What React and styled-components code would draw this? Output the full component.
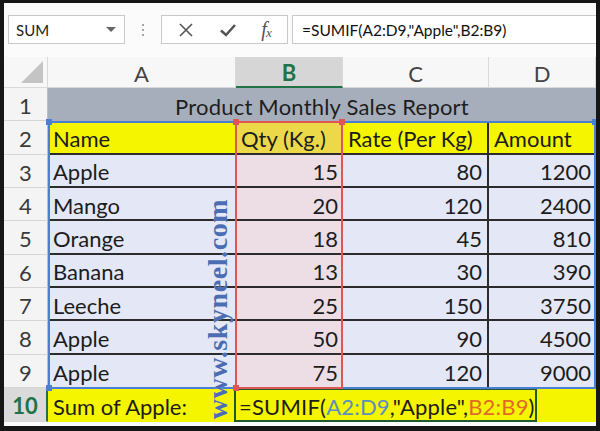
import React from "react";
import styled, { createGlobalStyle } from "styled-components";

const Global = createGlobalStyle`
  html, body { margin: 0; padding: 0; background: #151515; }
  #root { width: 600px; height: 431px; }
`;

const Frame = styled.div`
  width: 600px;
  height: 431px;
  box-sizing: border-box;
  padding: 3px 4px 5px 4px;
  background: #161616;
`;

const Window = styled.div`
  height: 100%;
  background: #fbfbfb;
  display: flex;
  flex-direction: column;
  overflow: hidden;
`;

const Toolbar = styled.div`
  height: 54px;
  box-sizing: border-box;
  padding: 12px 0 0 4px;
  display: flex;
  align-items: flex-start;
  font-family: "Lato", "Noto Sans", sans-serif;
  color: #222;
`;

const NameBox = styled.div`
  width: 117px;
  height: 29px;
  box-sizing: border-box;
  border: 1px solid #c9c9c9;
  background: #fff;
  display: flex;
  align-items: center;
  justify-content: space-between;
  padding: 0 8px 0 7px;
  font-size: 15px;
`;

const Caret = styled.span`
  width: 0;
  height: 0;
  border-left: 5px solid transparent;
  border-right: 5px solid transparent;
  border-top: 5px solid #666;
`;

const Dots = styled.div`
  width: 36px;
  height: 29px;
  display: flex;
  flex-direction: column;
  align-items: center;
  justify-content: center;
  gap: 3px;
  span { width: 2px; height: 2px; background: #888; border-radius: 1px; }
`;

const Buttons = styled.div`
  width: 127px;
  height: 29px;
  box-sizing: border-box;
  border: 1px solid #c9c9c9;
  background: #fff;
  display: flex;
  align-items: center;
  justify-content: space-around;
  padding: 0 4px;
`;

const Fx = styled.span`
  font-family: "Liberation Serif", serif;
  font-style: italic;
  font-size: 20px;
  color: #555;
  letter-spacing: -1px;
  sub { font-size: 13px; vertical-align: -1px; }
`;

const FormulaBox = styled.div`
  flex: 1;
  margin-left: 4px;
  height: 29px;
  box-sizing: border-box;
  border: 1px solid #c9c9c9;
  border-right: none;
  background: #fff;
  display: flex;
  align-items: center;
  padding-left: 9px;
  font-size: 15.5px;
  color: #111;
`;

const SheetWrap = styled.div`
  position: relative;
  height: 365px;
`;

const Sheet = styled.div`
  display: grid;
  grid-template-columns: 44px 188px 107px 146px 107px;
  grid-template-rows: 31px repeat(10, 1fr);
  height: 100%;
  font-family: "Lato", "Noto Sans", sans-serif;
  font-size: 22px;
  color: #1c1c1c;
`;

const Corner = styled.div`
  background: #f7f7f7;
  border-right: 1px solid #d9d9d9;
  border-bottom: 1px solid #d9d9d9;
  position: relative;
  &::after {
    content: "";
    position: absolute;
    right: 4px;
    bottom: 4px;
    width: 0;
    height: 0;
    border-left: 22px solid transparent;
    border-bottom: 22px solid #c4c4c4;
  }
`;

const ColHead = styled.div`
  background: ${(p) => (p.$active ? "#d6d6d6" : "#f7f7f7")};
  border-right: 1px solid #d9d9d9;
  border-bottom: ${(p) => (p.$active ? "2px solid #217346" : "1px solid #d9d9d9")};
  color: ${(p) => (p.$active ? "#217346" : "#444")};
  font-weight: ${(p) => (p.$active ? 700 : 400)};
  display: flex;
  align-items: center;
  justify-content: center;
  padding-top: 2px;
  font-size: 22px;
`;

const RowHead = styled.div`
  background: ${(p) => (p.$active ? "#dadada" : "#f4f4f4")};
  border-bottom: 1px solid #d6d6d6;
  border-right: ${(p) => (p.$active ? "2px solid #217346" : "1px solid #bdbdbd")};
  color: ${(p) => (p.$active ? "#217346" : "#3a3a3a")};
  font-weight: ${(p) => (p.$active ? 700 : 400)};
  display: flex;
  align-items: center;
  justify-content: center;
  padding-top: 3px;
`;

const Title = styled.div`
  grid-column: span 4;
  background: #a6aebb;
  display: flex;
  align-items: center;
  justify-content: center;
  padding-top: 3px;
  color: #1e1e1e;
  letter-spacing: 0.2px;
`;

const Cell = styled.div`
  box-sizing: border-box;
  background: ${(p) => p.$bg};
  display: flex;
  align-items: center;
  justify-content: ${(p) => (p.$right ? "flex-end" : "flex-start")};
  padding: 3px 5px 0;
  border-bottom: ${(p) => (p.$lineBottom ? "2px solid #2b2b2b" : "none")};
  border-right: ${(p) => (p.$lineRight ? "2px solid #2b2b2b" : "none")};
  white-space: nowrap;
`;

const SumRow = styled.div`
  grid-column: span 3;
  background: #f5f500;
  display: flex;
  align-items: stretch;
`;

const Editor = styled.div`
  width: 303px;
  margin-left: -2px;
  box-sizing: border-box;
  border: 2px solid #1f5a2e;
  display: flex;
  align-items: center;
  padding: 3px 0 0 3px;
  white-space: nowrap;
  letter-spacing: 0.2px;
`;

const Ref = styled.span`
  color: ${(p) => p.$c};
`;

const Selection = styled.div`
  position: absolute;
  box-sizing: border-box;
  left: ${(p) => p.$l}px;
  top: 64.4px;
  width: ${(p) => p.$w}px;
  height: 267.2px;
  border: ${(p) => p.$bw}px solid ${(p) => p.$c};
  pointer-events: none;
`;

const Handle = styled.div`
  position: absolute;
  width: 6px;
  height: 6px;
  background: ${(p) => p.$c};
  left: ${(p) => p.$x - 3}px;
  top: ${(p) => p.$y - 3}px;
`;

const Watermark = styled.div`
  position: absolute;
  left: 214px;
  top: 252px;
  transform: translate(-50%, -50%) rotate(-90deg);
  font-family: "Liberation Serif", "DejaVu Serif", serif;
  font-weight: 700;
  font-size: 28px;
  color: #4a6db3;
  white-space: nowrap;
  letter-spacing: 0.6px;
  text-shadow: 0 0 1px rgba(255, 255, 255, 0.6);
  pointer-events: none;
`;

const data = [
  ["Apple", 15, 80, 1200],
  ["Mango", 20, 120, 2400],
  ["Orange", 18, 45, 810],
  ["Banana", 13, 30, 390],
  ["Leeche", 25, 150, 3750],
  ["Apple", 50, 90, 4500],
  ["Apple", 75, 120, 9000],
];

const LAV = "#e4e7f5";
const PINK = "#eddde4";
const YEL = "#f5f500";
const YEL_B = "#ecd94a";

export default function App() {
  return (
    <>
      <Global />
      <Frame>
        <Window>
          <Toolbar>
            <NameBox>
              SUM <Caret />
            </NameBox>
            <Dots>
              <span />
              <span />
              <span />
            </Dots>
            <Buttons>
              <svg width="16" height="16" viewBox="0 0 16 16">
                <path d="M2 2 L14 14 M14 2 L2 14" stroke="#555" strokeWidth="1.6" fill="none" />
              </svg>
              <svg width="18" height="16" viewBox="0 0 18 16">
                <path d="M2 8.5 L7 13 L16 3" stroke="#555" strokeWidth="2.6" fill="none" />
              </svg>
              <Fx>
                f<sub>x</sub>
              </Fx>
            </Buttons>
            <FormulaBox>=SUMIF(A2:D9,"Apple",B2:B9)</FormulaBox>
          </Toolbar>
          <SheetWrap>
            <Sheet>
              <Corner />
              <ColHead>A</ColHead>
              <ColHead $active>B</ColHead>
              <ColHead>C</ColHead>
              <ColHead>D</ColHead>

              <RowHead>1</RowHead>
              <Title>Product Monthly Sales Report</Title>

              <RowHead>2</RowHead>
              <Cell $bg={YEL} $lineBottom>Name</Cell>
              <Cell $bg={YEL_B} $lineBottom>Qty (Kg.)</Cell>
              <Cell $bg={YEL} $lineBottom $lineRight>Rate (Per Kg)</Cell>
              <Cell $bg={YEL} $lineBottom>Amount</Cell>

              {data.map((r, i) => {
                const last = i === data.length - 1;
                return (
                  <React.Fragment key={i}>
                    <RowHead>{i + 3}</RowHead>
                    <Cell $bg={LAV} $lineBottom={!last}>{r[0]}</Cell>
                    <Cell $bg={PINK} $right $lineBottom={!last}>{r[1]}</Cell>
                    <Cell $bg={LAV} $right $lineBottom={!last} $lineRight>{r[2]}</Cell>
                    <Cell $bg={LAV} $right $lineBottom={!last}>{r[3]}</Cell>
                  </React.Fragment>
                );
              })}

              <RowHead $active>10</RowHead>
              <Cell $bg={YEL}>Sum of Apple:</Cell>
              <SumRow>
                <Editor>
                  =SUMIF(<Ref $c="#5a8fbf">A2:D9</Ref>,"Apple",<Ref $c="#e2692a">B2:B9</Ref>)
                </Editor>
              </SumRow>
            </Sheet>
            <Selection $l={44} $w={548} $bw={2} $c="#4a7fd4" />
            <Selection $l={231} $w={108} $bw={2} $c="#df5656" />
            <Handle $c="#4a7fd4" $x={45} $y={65} />
            <Handle $c="#4a7fd4" $x={591} $y={65} />
            <Handle $c="#4a7fd4" $x={45} $y={331} />
            <Handle $c="#df5656" $x={232} $y={65} />
            <Handle $c="#df5656" $x={338} $y={65} />
            <Handle $c="#df5656" $x={232} $y={331} />
            <Watermark>www.skyneel.com</Watermark>
          </SheetWrap>
        </Window>
      </Frame>
    </>
  );
}
